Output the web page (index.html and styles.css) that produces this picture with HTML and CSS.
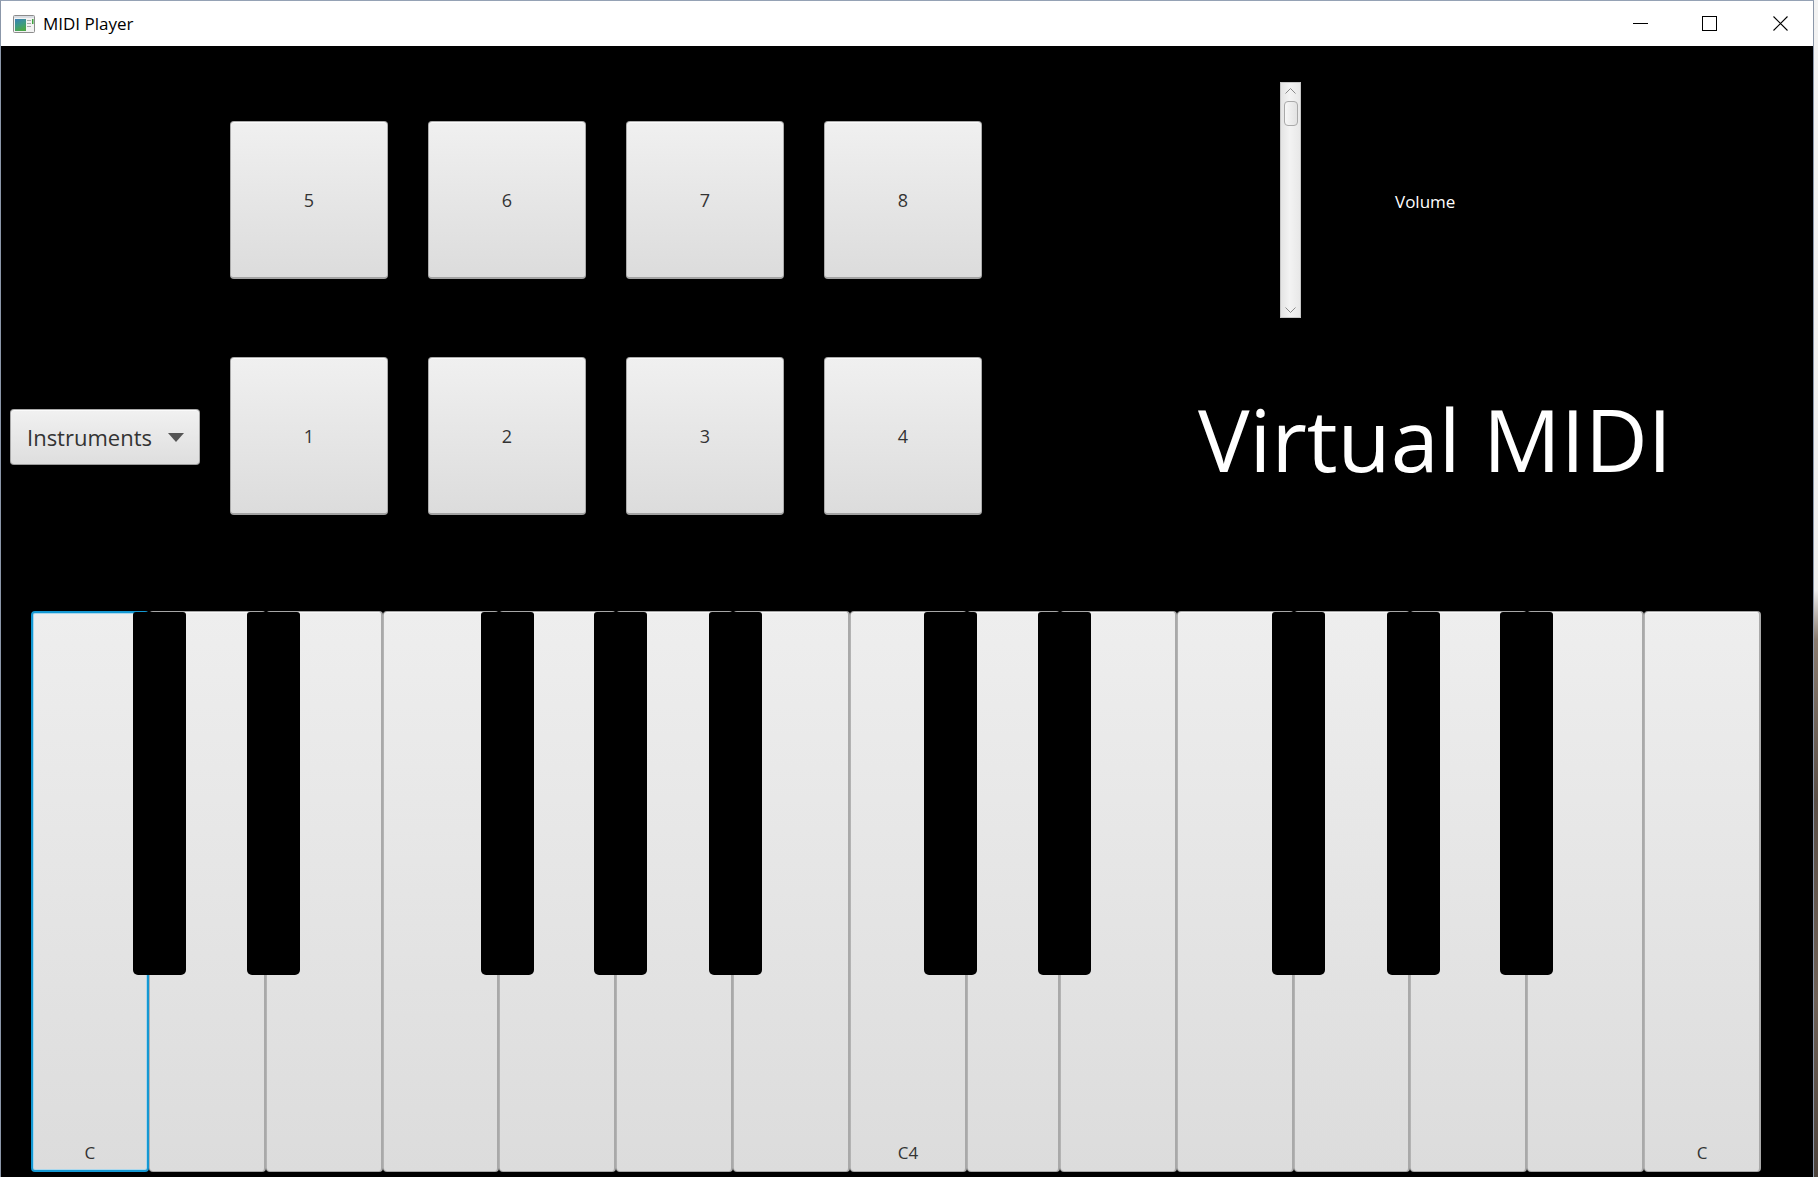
FILE: index.html
```html
<!DOCTYPE html>
<html>
<head>
<meta charset="utf-8">
<title>MIDI Player</title>
<link rel="stylesheet" href="styles.css">
</head>
<body>
<div class="screen">
  <div class="window">
    <div class="titlebar">
      <svg class="app-icon" viewBox="0 0 22 18" width="22" height="18">
        <defs>
          <linearGradient id="img" x1="0" y1="0" x2="0.4" y2="1">
            <stop offset="0" stop-color="#3a7fb8"/>
            <stop offset="0.55" stop-color="#3d9a86"/>
            <stop offset="1" stop-color="#4aa64a"/>
          </linearGradient>
        </defs>
        <rect x="0.5" y="0.5" width="21" height="17" rx="1" fill="#f3f3f3" stroke="#8c8c8c"/>
        <rect x="1" y="1" width="20" height="2" fill="#d9dde3"/>
        <rect x="2" y="4" width="11" height="12" fill="url(#img)"/>
        <rect x="14" y="5" width="4" height="1" fill="#a8a8a8"/>
        <rect x="14" y="8" width="4" height="1" fill="#a8a8a8"/>
        <rect x="14" y="11" width="4" height="1" fill="#a8a8a8"/>
        <rect x="19" y="4" width="1.5" height="5" fill="#3fa33f"/>
      </svg>
      <span class="title">MIDI Player</span>
      <div class="controls">
        <div class="ctl">
          <svg width="15" height="15" viewBox="0 0 15 15"><line x1="0" y1="7.5" x2="15" y2="7.5" stroke="#000" stroke-width="1"/></svg>
        </div>
        <div class="ctl">
          <svg width="15" height="15" viewBox="0 0 15 15"><rect x="0.5" y="0.5" width="14" height="14" fill="none" stroke="#000" stroke-width="1"/></svg>
        </div>
        <div class="ctl close">
          <svg width="15" height="15" viewBox="0 0 15 15"><path d="M0.5 0.5 L14.5 14.5 M14.5 0.5 L0.5 14.5" stroke="#000" stroke-width="1.1" fill="none"/></svg>
        </div>
      </div>
    </div>

    <div class="content">
      <div class="top">
        <div class="left">
          <div class="combo">
            <span class="combo-text">Instruments</span>
            <svg class="combo-arrow" width="16" height="9" viewBox="0 0 16 9"><path d="M0 0 H16 L8 9 Z" fill="#555"/></svg>
          </div>
        </div>

        <div class="pads">
          <div class="pad">5</div>
          <div class="pad">6</div>
          <div class="pad">7</div>
          <div class="pad">8</div>
          <div class="pad">1</div>
          <div class="pad">2</div>
          <div class="pad">3</div>
          <div class="pad">4</div>
        </div>

        <div class="right">
          <div class="vol-row">
            <div class="scrollbar">
              <div class="sb-arrow">
                <svg width="11" height="6" viewBox="0 0 11 6"><polyline points="0.5,5.5 5.5,0.5 10.5,5.5" fill="none" stroke="#8a8a8a" stroke-width="1"/></svg>
              </div>
              <div class="sb-track">
                <div class="thumb"></div>
              </div>
              <div class="sb-arrow">
                <svg width="11" height="6" viewBox="0 0 11 6"><polyline points="0.5,0.5 5.5,5.5 10.5,0.5" fill="none" stroke="#8a8a8a" stroke-width="1"/></svg>
              </div>
            </div>
            <span class="vol-label">Volume</span>
          </div>
          <div class="brand">Virtual MIDI</div>
        </div>
      </div>

      <div class="piano">
        <div class="wk focus"><span class="wk-label">C</span></div>
        <div class="wk"></div>
        <div class="wk"></div>
        <div class="wk"></div>
        <div class="wk"></div>
        <div class="wk"></div>
        <div class="wk"></div>
        <div class="wk"><span class="wk-label">C4</span></div>
        <div class="wk narrow"></div>
        <div class="wk"></div>
        <div class="wk"></div>
        <div class="wk"></div>
        <div class="wk"></div>
        <div class="wk"></div>
        <div class="wk"><span class="wk-label">C</span></div>

        <div class="bk" style="left:102px"></div>
        <div class="bk" style="left:216px"></div>
        <div class="bk" style="left:450px"></div>
        <div class="bk" style="left:563px"></div>
        <div class="bk" style="left:678px"></div>
        <div class="bk" style="left:893px"></div>
        <div class="bk" style="left:1007px"></div>
        <div class="bk" style="left:1241px"></div>
        <div class="bk" style="left:1356px"></div>
        <div class="bk" style="left:1469px"></div>
      </div>
    </div>
  </div>
  <div class="desk"></div>
</div>
</body>
</html>
```

FILE: styles.css
```css
html, body {
  margin: 0;
  padding: 0;
}

body {
  width: 1818px;
  height: 1177px;
  overflow: hidden;
  background: #000;
  font-family: "Open Sans", "Noto Sans", "DejaVu Sans", sans-serif;
}

.screen {
  display: flex;
  width: 1818px;
  height: 1177px;
}

.window {
  width: 1814px;
  height: 1177px;
  box-sizing: border-box;
  border-top: 1px solid #95a2b5;
  border-left: 1px solid #8b97a9;
  border-right: 1px solid #8b97a9;
  display: flex;
  flex-direction: column;
  flex-shrink: 0;
}

.desk {
  width: 4px;
  flex-shrink: 0;
  background: linear-gradient(to bottom, #f2f2f2 0, #eeeeee 590px, #8a7c70 640px, #5b5048 800px, #6f6258 1000px, #4e453e 1177px);
}

/* ---------- title bar ---------- */
.titlebar {
  height: 45px;
  flex-shrink: 0;
  background: #fff;
  display: flex;
  align-items: center;
}

.app-icon {
  margin-left: 12px;
  flex-shrink: 0;
}

.title {
  margin-left: 8px;
  font-size: 17px;
  color: #000;
  white-space: nowrap;
}

.controls {
  margin-left: auto;
  height: 100%;
  display: flex;
}

.ctl {
  width: 69px;
  height: 100%;
  box-sizing: border-box;
  display: flex;
  align-items: center;
  justify-content: center;
}

.ctl.close {
  padding-left: 4px;
}

/* ---------- content ---------- */
.content {
  flex: 1;
  background: #000;
  display: flex;
  flex-direction: column;
}

.top {
  height: 565px;
  flex-shrink: 0;
  display: flex;
}

.left {
  width: 229px;
  flex-shrink: 0;
  box-sizing: border-box;
  padding-top: 363px;
  padding-left: 9px;
}

.combo {
  width: 190px;
  height: 56px;
  box-sizing: border-box;
  border: 1px solid #a9a9a9;
  border-bottom-color: #9c9c9c;
  border-radius: 4px;
  background: linear-gradient(to bottom, #f1f1f1, #dedede);
  box-shadow: inset 0 1px 0 #fbfbfb;
  display: flex;
  align-items: center;
  padding-left: 16px;
  padding-right: 15px;
}

.combo-text {
  flex: 1;
  font-size: 22px;
  color: #333;
  white-space: nowrap;
}

.combo-arrow {
  flex-shrink: 0;
}

.pads {
  width: 752px;
  flex-shrink: 0;
  box-sizing: border-box;
  padding-top: 75px;
  display: grid;
  grid-template-columns: repeat(4, 158px);
  grid-template-rows: 158px 158px;
  column-gap: 40px;
  row-gap: 78px;
  align-content: start;
}

.pad {
  box-sizing: border-box;
  border: 1px solid #ababab;
  border-bottom: 2px solid #a3a3a3;
  border-radius: 4px;
  background: linear-gradient(to bottom, #f0f0f0, #dcdcdc);
  box-shadow: inset 0 1px 0 #fbfbfb;
  display: flex;
  align-items: center;
  justify-content: center;
  font-size: 18px;
  color: #333;
}

.right {
  flex: 1;
}

.vol-row {
  margin-top: 36px;
  padding-left: 298px;
  display: flex;
  align-items: center;
}

.scrollbar {
  width: 21px;
  height: 236px;
  box-sizing: border-box;
  border: 1px solid #c6c6c6;
  background: linear-gradient(to right, #e4e4e4, #f3f3f3 45%, #e8e8e8);
  display: flex;
  flex-direction: column;
  align-items: center;
}

.sb-arrow {
  height: 15px;
  width: 100%;
  display: flex;
  align-items: center;
  justify-content: center;
  flex-shrink: 0;
}

.sb-track {
  flex: 1;
  width: 100%;
  display: flex;
  flex-direction: column;
  align-items: center;
}

.thumb {
  margin-top: 3px;
  width: 14px;
  height: 25px;
  box-sizing: border-box;
  border: 1px solid #a9a9a9;
  border-radius: 4px;
  background: linear-gradient(to right, #f7f7f7, #e2e2e2);
}

.vol-label {
  margin-left: 94px;
  margin-top: 2px;
  font-size: 17px;
  color: #fff;
}

.brand {
  margin-top: 71px;
  padding-left: 216px;
  font-size: 86.5px;
  line-height: 99px;
  color: #fff;
  white-space: nowrap;
}

/* ---------- piano ---------- */
.piano {
  position: relative;
  margin-left: 30px;
  width: 1730px;
  height: 561px;
  flex-shrink: 0;
  display: flex;
}

.wk {
  flex: 1;
  box-sizing: border-box;
  border: 1px solid #a6a6a6;
  border-left-color: #b3b3b3;
  border-right: 2px solid #a9a9a9;
  border-radius: 4px;
  background: linear-gradient(to bottom, #eeeeee, #dcdcdc);
  box-shadow: inset 0 1px 0 #f8f8f8;
  display: flex;
  flex-direction: column;
  justify-content: flex-end;
  align-items: center;
  padding-bottom: 8px;
}

.wk.narrow {
  flex: 0 0 93px;
}

.wk.focus {
  border: 2px solid #1598d2;
  box-shadow: inset 0 0 0 1px #a9d8ee;
  padding-bottom: 7px;
}

.wk-label {
  font-size: 17px;
  line-height: 20px;
  color: #333;
}

.bk {
  position: absolute;
  top: 1px;
  width: 53px;
  height: 363px;
  background: #000;
  border-radius: 3px 3px 5px 5px;
}
```
